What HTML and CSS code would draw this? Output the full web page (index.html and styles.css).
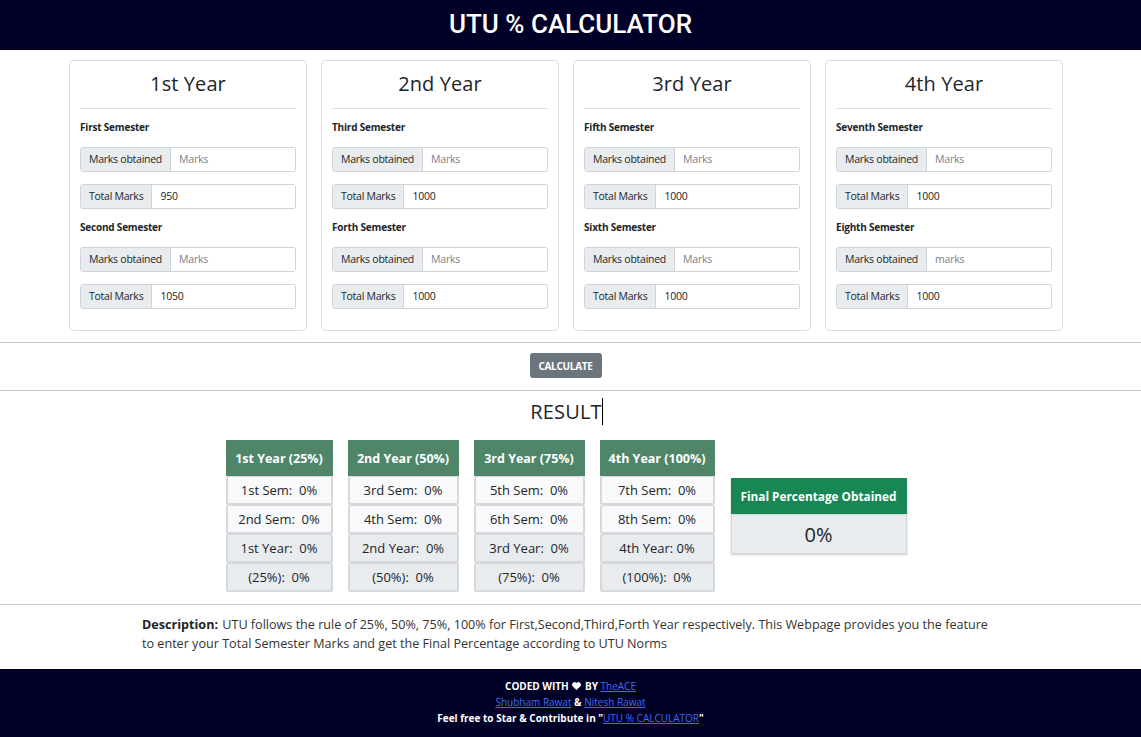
FILE: index.html
```html
<!DOCTYPE html>
<html>
<head>
<meta charset="utf-8">
<title>UTU % Calculator</title>
<link rel="stylesheet" href="styles.css">
</head>
<body>
<header class="topbar"><h1 class="brand">UTU % CALCULATOR</h1></header>

<main>
  <section class="cards">
    <div class="card">
      <h2 class="card-title">1st Year</h2>
      <hr class="card-rule">
      <div class="sem-label">First Semester</div>
      <div class="igroup"><span class="addon">Marks obtained</span><input class="field" placeholder="Marks"></div>
      <div class="igroup"><span class="addon">Total Marks</span><input class="field" value="950"></div>
      <div class="sem-label">Second Semester</div>
      <div class="igroup"><span class="addon">Marks obtained</span><input class="field" placeholder="Marks"></div>
      <div class="igroup"><span class="addon">Total Marks</span><input class="field" value="1050"></div>
    </div>
    <div class="card">
      <h2 class="card-title">2nd Year</h2>
      <hr class="card-rule">
      <div class="sem-label">Third Semester</div>
      <div class="igroup"><span class="addon">Marks obtained</span><input class="field" placeholder="Marks"></div>
      <div class="igroup"><span class="addon">Total Marks</span><input class="field" value="1000"></div>
      <div class="sem-label">Forth Semester</div>
      <div class="igroup"><span class="addon">Marks obtained</span><input class="field" placeholder="Marks"></div>
      <div class="igroup"><span class="addon">Total Marks</span><input class="field" value="1000"></div>
    </div>
    <div class="card">
      <h2 class="card-title">3rd Year</h2>
      <hr class="card-rule">
      <div class="sem-label">Fifth Semester</div>
      <div class="igroup"><span class="addon">Marks obtained</span><input class="field" placeholder="Marks"></div>
      <div class="igroup"><span class="addon">Total Marks</span><input class="field" value="1000"></div>
      <div class="sem-label">Sixth Semester</div>
      <div class="igroup"><span class="addon">Marks obtained</span><input class="field" placeholder="Marks"></div>
      <div class="igroup"><span class="addon">Total Marks</span><input class="field" value="1000"></div>
    </div>
    <div class="card">
      <h2 class="card-title">4th Year</h2>
      <hr class="card-rule">
      <div class="sem-label">Seventh Semester</div>
      <div class="igroup"><span class="addon">Marks obtained</span><input class="field" placeholder="Marks"></div>
      <div class="igroup"><span class="addon">Total Marks</span><input class="field" value="1000"></div>
      <div class="sem-label">Eighth Semester</div>
      <div class="igroup"><span class="addon">Marks obtained</span><input class="field" placeholder="marks"></div>
      <div class="igroup"><span class="addon">Total Marks</span><input class="field" value="1000"></div>
    </div>
  </section>

  <hr class="rule">
  <div class="btn-row"><button class="btn-calc">CALCULATE</button></div>
  <hr class="rule">

  <h2 class="result-title"><span class="caret">RESULT</span></h2>

  <section class="results">
    <div class="rtable w1">
      <div class="rhead">1st Year (25%)</div>
      <div class="rcell light">1st Sem:&nbsp; 0%</div>
      <div class="rcell light">2nd Sem:&nbsp; 0%</div>
      <div class="rcell dark">1st Year:&nbsp; 0%</div>
      <div class="rcell dark">(25%):&nbsp; 0%</div>
    </div>
    <div class="rtable w2">
      <div class="rhead">2nd Year (50%)</div>
      <div class="rcell light">3rd Sem:&nbsp; 0%</div>
      <div class="rcell light">4th Sem:&nbsp; 0%</div>
      <div class="rcell dark">2nd Year:&nbsp; 0%</div>
      <div class="rcell dark">(50%):&nbsp; 0%</div>
    </div>
    <div class="rtable w3">
      <div class="rhead">3rd Year (75%)</div>
      <div class="rcell light">5th Sem:&nbsp; 0%</div>
      <div class="rcell light">6th Sem:&nbsp; 0%</div>
      <div class="rcell dark">3rd Year:&nbsp; 0%</div>
      <div class="rcell dark">(75%):&nbsp; 0%</div>
    </div>
    <div class="rtable w4">
      <div class="rhead">4th Year (100%)</div>
      <div class="rcell light">7th Sem:&nbsp; 0%</div>
      <div class="rcell light">8th Sem:&nbsp; 0%</div>
      <div class="rcell dark">4th Year: 0%</div>
      <div class="rcell dark">(100%):&nbsp; 0%</div>
    </div>
    <div class="final">
      <div class="final-head">Final Percentage Obtained</div>
      <div class="final-value">0%</div>
    </div>
  </section>

  <hr class="rule rule-desc">
  <p class="desc"><strong class="desc-label">Description:</strong> UTU follows the rule of 25%, 50%, 75%, 100% for First,Second,Third,Forth Year respectively. This Webpage provides you the feature to enter your Total Semester Marks and get the Final Percentage according to UTU Norms</p>
</main>

<footer class="footer">
  <div>CODED WITH <svg class="heart" viewBox="0 0 24 24" width="11" height="10"><path d="M12 21.5 2.6 12.4A5.6 5.6 0 0 1 12 4.9a5.6 5.6 0 0 1 9.4 7.5Z" fill="#fff"/></svg> BY <a href="#">TheACE</a></div>
  <div><a href="#">Shubham Rawat</a> &amp; <a href="#">Nitesh Rawat</a></div>
  <div>Feel free to Star &amp; Contribute in "<a href="#">UTU % CALCULATOR</a>"</div>
</footer>
</body>
</html>
```

FILE: styles.css
```css
* { box-sizing: border-box; }
html, body { margin: 0; padding: 0; }
body {
  font-family: "Open Sans", "Noto Sans", sans-serif;
  color: #212529;
  background: #fff;
}

.topbar {
  height: 50px;
  background: #010127;
  display: flex;
  align-items: center;
  justify-content: center;
}
.brand {
  margin: 0;
  font-family: Roboto, "Liberation Sans", sans-serif;
  font-weight: 500;
  font-size: 26px;
  color: #fff;
  line-height: 1;
  padding-bottom: 3px;
}

.cards {
  display: flex;
  gap: 14px;
  padding: 10px 0 0 69px;
}
.card {
  width: 238px;
  border: 1px solid #dcdcdc;
  border-radius: 4px;
  padding: 10px 10px 9px;
}
.card-title {
  margin: 1px 0 0;
  font-size: 20px;
  font-weight: 400;
  line-height: 24px;
  text-align: center;
  letter-spacing: 0.1px;
}
.card-rule {
  margin: 12px 0 10px;
  border: 0;
  border-top: 1px solid #dedede;
}
.sem-label {
  font-size: 10px;
  font-weight: 700;
  letter-spacing: -0.2px;
  line-height: 16px;
  margin-bottom: 12px;
}
.igroup {
  display: flex;
  height: 25px;
  margin-bottom: 12px;
  border: 1px solid #ced4da;
  border-radius: 3px;
  overflow: hidden;
}
.igroup + .sem-label { margin-top: -2px; }
.addon {
  background: #e9ecef;
  border-right: 1px solid #ced4da;
  font-size: 10.5px;
  letter-spacing: -0.25px;
  line-height: 23px;
  padding: 0 8px;
  white-space: nowrap;
}
.field {
  flex: 1;
  min-width: 0;
  border: 0;
  outline: 0;
  padding: 0 8px 1px;
  font-family: inherit;
  font-size: 10.5px;
  letter-spacing: -0.2px;
  color: #212529;
  background: #fff;
}
.field::placeholder { color: #7a8088; }

.rule {
  margin: 11px 0 0;
  border: 0;
  border-top: 1px solid #c8c8c8;
}
.btn-row {
  display: flex;
  justify-content: center;
  padding: 10px 10px 12px 0;
}
.btn-calc {
  height: 25px;
  width: 72px;
  padding: 0;
  border: 0;
  border-radius: 3px;
  background: #6c757d;
  color: #fff;
  font-family: inherit;
  font-size: 10px;
  font-weight: 700;
  letter-spacing: -0.3px;
}
.btn-row + .rule { margin-top: 0; }

.result-title {
  margin: 9px 0 0;
  padding-right: 8px;
  text-align: center;
  font-size: 20px;
  font-weight: 400;
  line-height: 24px;
  letter-spacing: 0.2px;
}
.caret {
  border-right: 1px solid #000;
}

.results {
  display: flex;
  align-items: center;
  justify-content: center;
  gap: 15px;
  margin-top: 16px;
  padding-right: 9px;
}
.rtable { display: flex; flex-direction: column; }
.w1 { width: 107px; }
.w2 { width: 111px; }
.w3 { width: 111px; }
.w4 { width: 115px; }
.rhead {
  height: 36px;
  background: #4f866a;
  color: #fff;
  font-size: 12.5px;
  font-weight: 700;
  display: flex;
  align-items: center;
  justify-content: center;
  white-space: nowrap;
}
.rcell {
  height: 29px;
  border: 2px solid #d6d8db;
  border-top-width: 1px;
  border-radius: 2px;
  font-size: 13px;
  display: flex;
  align-items: center;
  justify-content: center;
  white-space: nowrap;
}
.light { background: #f8f9fa; }
.dark { background: #e9ecef; }

.final {
  width: 176px;
  margin-left: 1px;
  box-shadow: 0 1px 2px rgba(0,0,0,0.2);
}
.final-head {
  height: 36px;
  background: #198754;
  color: #fff;
  font-size: 11.8px;
  font-weight: 700;
  display: flex;
  align-items: center;
  justify-content: center;
  white-space: nowrap;
}
.final-value {
  height: 40px;
  background: #e9ecef;
  border: 1px solid #d6d8db;
  font-size: 20px;
  display: flex;
  align-items: center;
  justify-content: center;
}

.rule-desc { margin-top: 12px; }
.desc {
  width: 852px;
  margin: 10px 0 16px 142px;
  font-size: 12.6px;
  line-height: 19px;
  color: #333;
}
.desc-label { color: #212529; margin-right: 1px; }

.footer {
  background: #010127;
  color: #fff;
  font-size: 10px;
  font-weight: 700;
  line-height: 16px;
  text-align: center;
  padding: 9px 0 11px;
}
.footer a { color: #3b6cf6; text-decoration: underline; font-weight: 400; }
.heart { vertical-align: -1px; }
```
